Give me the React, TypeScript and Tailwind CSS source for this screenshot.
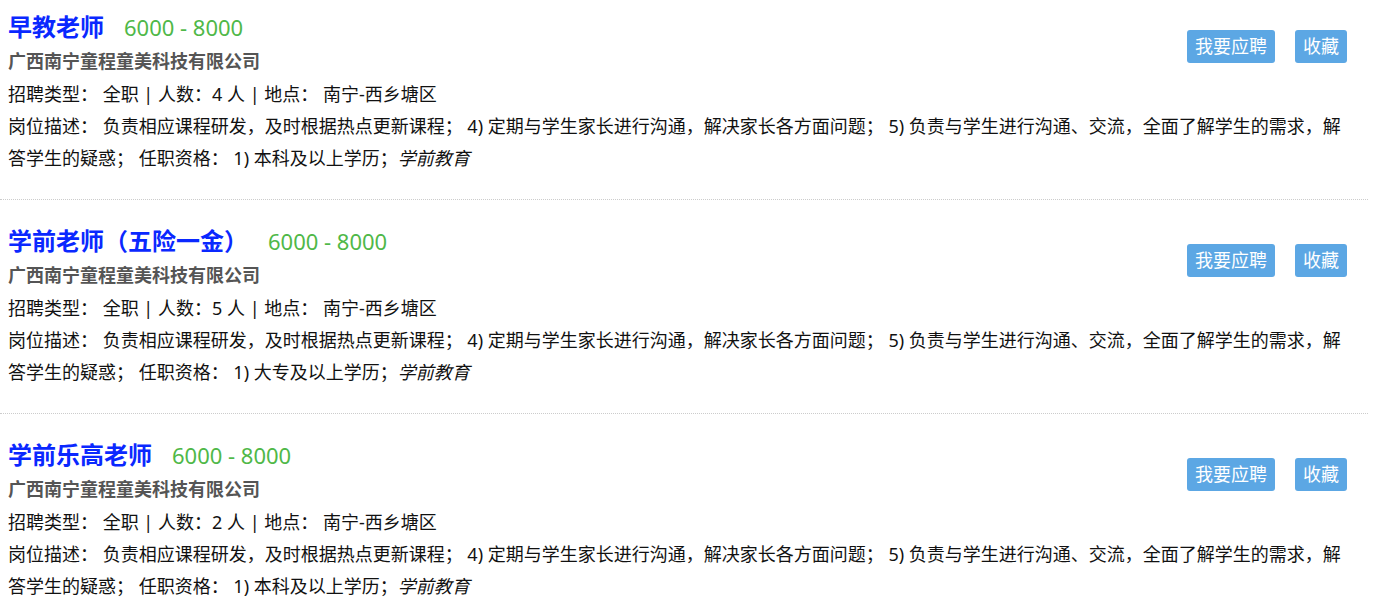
import React from 'react';

interface Job {
    title: string;
    salary: string;
    company: string;
    count: number;
    location: string;
    degree: string;
}

const jobs: Job[] = [
    { title: '早教老师', salary: '6000 - 8000', company: '广西南宁童程童美科技有限公司', count: 4, location: '南宁-西乡塘区', degree: '1) 本科及以上学历；' },
    { title: '学前老师（五险一金）', salary: '6000 - 8000', company: '广西南宁童程童美科技有限公司', count: 5, location: '南宁-西乡塘区', degree: '1) 大专及以上学历；' },
    { title: '学前乐高老师', salary: '6000 - 8000', company: '广西南宁童程童美科技有限公司', count: 2, location: '南宁-西乡塘区', degree: '1) 本科及以上学历；' },
];

const font = "font-['Noto_Sans','Noto_Sans_CJK_SC',sans-serif]";

const JobItem: React.FC<{ job: Job }> = ({ job }) => (
    <div className="border-b border-dotted border-[#cccccc] pt-[24px] pb-[25px] pl-2 pr-[21px]">
        <div className="flex">
            <div className="flex-1">
                <div className="flex items-center h-[34px]">
                    <span className="text-[24px] font-bold text-[#0a28ff]">{job.title}</span>
                    <span className="ml-[20px] text-[22px] text-[#4fb848]">{job.salary}</span>
                </div>
                <div className="h-[34px] leading-[34px] text-[18px] font-bold text-[#555555]">{job.company}</div>
                <div className="h-[32px] leading-[32px] text-[18px] text-[#111]">
                    招聘类型： 全职 | 人数：{job.count} 人 | 地点： {job.location}
                </div>
            </div>
            <div className="flex gap-[20px] pt-[20px]">
                <button className="h-[33px] px-2 rounded-[3px] bg-[#5ca7e4] text-white text-[18px] leading-[33px]">我要应聘</button>
                <button className="h-[33px] px-2 rounded-[3px] bg-[#5ca7e4] text-white text-[18px] leading-[33px]">收藏</button>
            </div>
        </div>
        <div className="text-[18px] leading-[32px] text-[#111]">
            岗位描述： 负责相应课程研发，及时根据热点更新课程； 4) 定期与学生家长进行沟通，解决家长各方面问题； 5) 负责与学生进行沟通、交流，全面了解学生的需求，解答学生的疑惑； 任职资格： {job.degree}
            <i>学前教育</i>
        </div>
    </div>
);

export default function App() {
    return (
        <div className={`bg-white w-[1382px] h-[611px] overflow-hidden ${font}`}>
            <div className="w-[1368px] -mt-[14px]">
                {jobs.map((job, i) => (
                    <JobItem key={i} job={job} />
                ))}
            </div>
        </div>
    );
}
